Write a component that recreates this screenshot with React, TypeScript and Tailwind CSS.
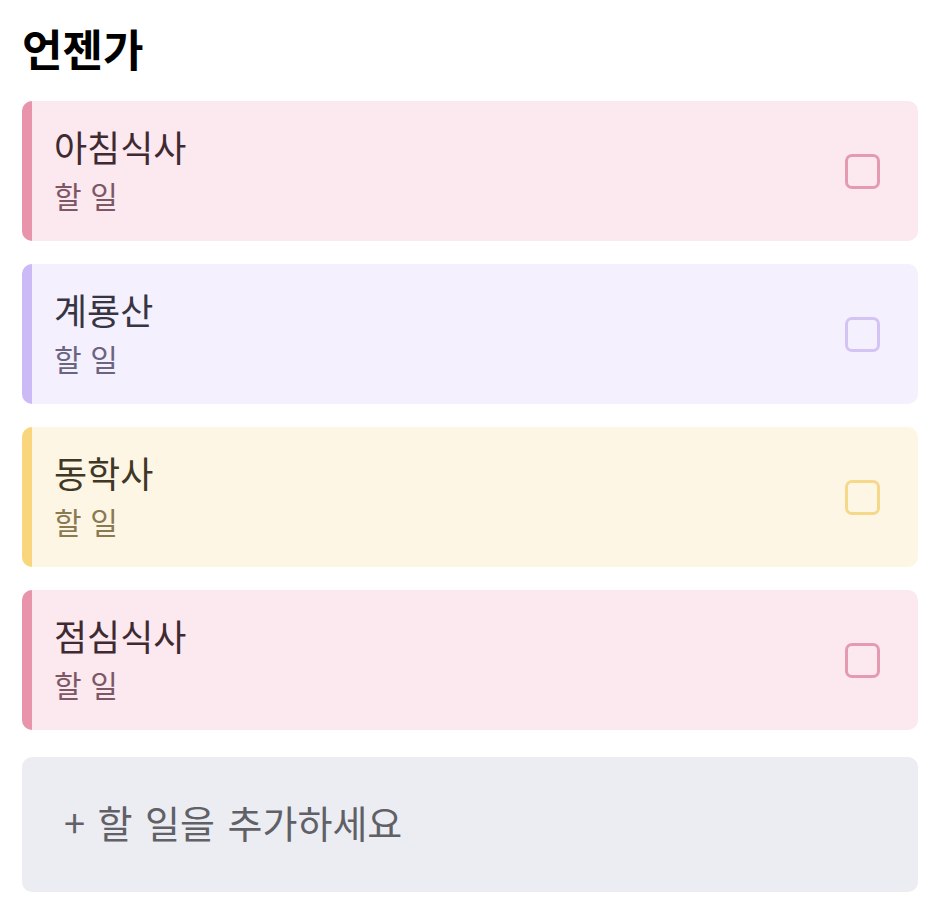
import React from 'react';

type Item = {
    title: string;
    bg: string;
    bar: string;
    titleColor: string;
    subColor: string;
    box: string;
};

const items: Item[] = [
    { title: '아침식사', bg: 'bg-[#fce8ef]', bar: 'bg-[#e894aa]', titleColor: 'text-[#3f2a31]', subColor: 'text-[#7c5866]', box: 'border-[#e49ab0]' },
    { title: '계룡산', bg: 'bg-[#f4f0fe]', bar: 'bg-[#cbbaf6]', titleColor: 'text-[#383543]', subColor: 'text-[#6b6480]', box: 'border-[#d4c4f4]' },
    { title: '동학사', bg: 'bg-[#fef6e5]', bar: 'bg-[#f9d67e]', titleColor: 'text-[#3f3826]', subColor: 'text-[#8a7a52]', box: 'border-[#f6d88b]' },
    { title: '점심식사', bg: 'bg-[#fce8ef]', bar: 'bg-[#e894aa]', titleColor: 'text-[#3f2a31]', subColor: 'text-[#7c5866]', box: 'border-[#e49ab0]' },
];

function TodoCard({ item }: { item: Item }) {
    return (
        <div className={`flex h-[140px] overflow-hidden rounded-[10px] ${item.bg}`}>
            <div className={`w-[10px] shrink-0 ${item.bar}`} />
            <div className="flex flex-1 items-center justify-between pl-[22px] pr-[38px]">
                <div className="flex flex-col gap-[11px]">
                    <span className={`text-[36px] leading-[36px] ${item.titleColor}`}>{item.title}</span>
                    <span className={`text-[30px] leading-[40px] [word-spacing:2px] ${item.subColor}`}>할 일</span>
                </div>
                <div className={`h-[35px] w-[35px] rounded-[7px] border-[3px] ${item.box}`} />
            </div>
        </div>
    );
}

export default function App() {
    return (
        <div className="min-h-screen bg-white pl-[22px] pr-[30px] pt-[22px]" style={{ fontFamily: '"Noto Sans CJK KR", "Noto Sans", sans-serif' }}>
            <h1 className="text-[44px] font-bold leading-[52px] text-black">언젠가</h1>
            <div className="mt-[27px] flex flex-col gap-[23px]">
                {items.map((item, i) => (
                    <TodoCard key={i} item={item} />
                ))}
                <div className="mt-[4px] flex h-[135px] items-center rounded-[10px] bg-[#ecedf2] pb-[6px] pl-[42px]">
                    <span className="text-[38px] text-[#606066] [word-spacing:4px]">+ 할 일을 추가하세요</span>
                </div>
            </div>
        </div>
    );
}
